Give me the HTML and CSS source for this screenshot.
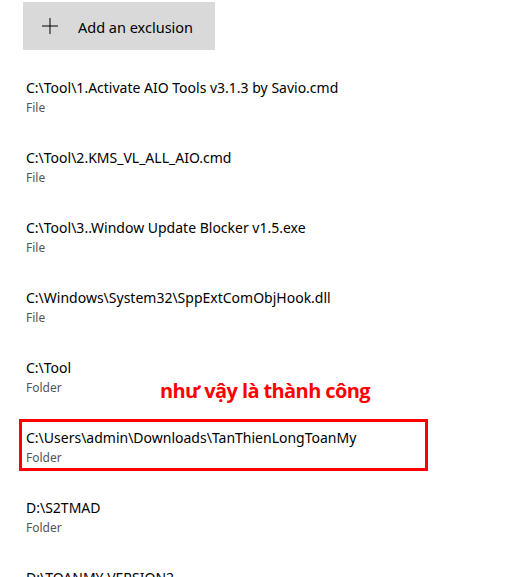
FILE: index.html
```html
<!DOCTYPE html>
<html>
<head>
<meta charset="utf-8">
<link rel="stylesheet" href="styles.css">
</head>
<body>
<div class="page">
  <button class="add-btn">
    <svg class="plus" width="16" height="16" viewBox="0 0 16 16"><path d="M8 0V16M0 8H16" stroke="#000" stroke-width="1" fill="none"/></svg>
    <span>Add an exclusion</span>
  </button>
  <ul class="list">
    <li class="item"><div class="name">C:\Tool\1.Activate AIO Tools v3.1.3 by Savio.cmd</div><div class="type">File</div></li>
    <li class="item"><div class="name">C:\Tool\2.KMS_VL_ALL_AIO.cmd</div><div class="type">File</div></li>
    <li class="item"><div class="name">C:\Tool\3..Window Update Blocker v1.5.exe</div><div class="type">File</div></li>
    <li class="item"><div class="name">C:\Windows\System32\SppExtComObjHook.dll</div><div class="type">File</div></li>
    <li class="item"><div class="name">C:\Tool</div><div class="type">Folder</div></li>
    <li class="item highlight"><span class="note">như vậy là thành công</span><div class="name">C:\Users\admin\Downloads\TanThienLongToanMy</div><div class="type">Folder</div></li>
    <li class="item"><div class="name">D:\S2TMAD</div><div class="type">Folder</div></li>
    <li class="item"><div class="name">D:\TOANMY VERSION2</div><div class="type">Folder</div></li>
  </ul>
</div>
</body>
</html>
```
FILE: styles.css
```css
html, body { margin: 0; padding: 0; background: #fff; overflow: hidden; }
body { font-family: "Noto Sans", "Open Sans", sans-serif; color: #000; }
.page { padding-top: 2px; }
.add-btn {
  margin-left: 23px;
  width: 192px;
  height: 48px;
  background: #d9d9d9;
  border: none;
  display: flex;
  align-items: center;
  padding: 1px 0 0 19px;
  gap: 20px;
  font-family: inherit;
  font-size: 14.5px;
  color: #000;
}
.plus { flex: none; margin-top: -1px; }
.list { list-style: none; margin: 28px 0 0 0; padding: 0 0 0 26px; }
.item { height: 70px; position: relative; }
.name { font-size: 14px; line-height: 20px; height: 20px; white-space: nowrap; }
.type { font-size: 12px; line-height: 18px; color: #555; padding-top: 1px; }
.highlight::after {
  content: "";
  position: absolute;
  left: -7px;
  top: -9px;
  width: 403px;
  height: 46px;
  border: 3px solid #f00;
}
.note {
  position: absolute;
  left: 134px;
  top: -49px;
  font-family: "Open Sans", sans-serif;
  font-weight: 700;
  font-size: 20px;
  letter-spacing: -0.6px;
  line-height: 24px;
  color: #f00;
  white-space: nowrap;
}
```
